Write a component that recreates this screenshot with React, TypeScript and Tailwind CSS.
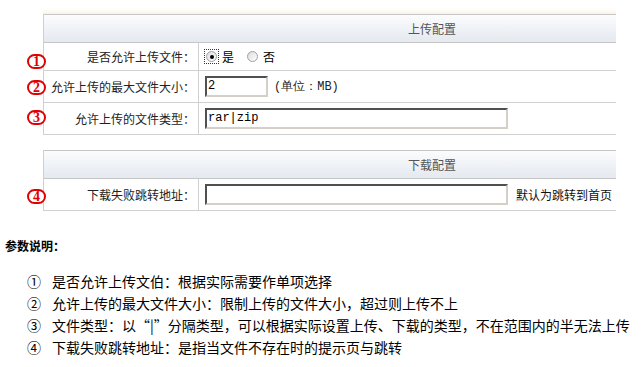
const cn = "font-['Noto_Sans_CJK_SC',sans-serif]"

function Mark({ n, className }: { n: string; className: string }) {
  return (
    <span
      className={`absolute left-[27px] flex h-[15px] w-[19px] items-center justify-center rounded-full border-2 border-[#e00000] bg-white font-['Liberation_Serif',serif] text-[14px] font-bold leading-none text-[#e00000] ${className}`}
    >
      {n}
    </span>
  )
}

function Radio({ checked }: { checked?: boolean }) {
  return (
    <span className={`flex h-[13px] w-[13px] items-center justify-center ${checked ? "outline-1 outline-dotted outline-[#333]" : ""}`}>
      <span className="flex h-[11px] w-[11px] items-center justify-center rounded-full border border-[#a0a0a0] bg-gradient-to-br from-[#dcdcdc] to-white">
        {checked && <span className="h-[4px] w-[4px] rounded-full bg-black" />}
      </span>
    </span>
  )
}

function Input({ w, value }: { w: string; value?: string }) {
  return (
    <div
      className={`${w} h-[21px] border-2 border-t-[#505050] border-l-[#505050] border-r-[#d4d0c8] border-b-[#d4d0c8] bg-white pl-[1px] font-['Liberation_Mono',monospace] text-[12px] leading-[17px] text-black`}
    >
      {value}
    </div>
  )
}

function Row({ label, h, children }: { label: string; h: string; children: React.ReactNode }) {
  return (
    <div className={`flex ${h} border-b border-[#d0d0d0]`}>
      <div className="flex w-[155px] items-center justify-end border-r border-[#d0d0d0] pr-[3px] text-[12px] text-[#222]">
        {label}
      </div>
      <div className="flex flex-1 items-center gap-[6px] pl-[6px]">{children}</div>
    </div>
  )
}

function Header({ title }: { title: string }) {
  return (
    <div className="flex h-[29px] items-center border-y border-[#c6c6c6] bg-gradient-to-b from-[#fbfcfd] to-[#e4e9f0] pl-[364px] text-[12px] text-[#555]">
      {title}
    </div>
  )
}

export default function App() {
  return (
    <div className={`relative h-[367px] w-[642px] overflow-hidden bg-white ${cn}`}>
      <div className="ml-[43px] mt-[8px] h-[6px] w-[573px] bg-gradient-to-b from-white to-[#fdf3e6]" />
      <div className="ml-[43px] w-[573px] border-l border-[#d0d0d0]">
        <Header title="上传配置" />
        <Row label="是否允许上传文件：" h="h-[28px]">
          <div className="flex items-center gap-[4px] text-[12px]">
            <Radio checked />
            <span>是</span>
            <span className="ml-[4px]" />
            <Radio />
            <span>否</span>
          </div>
        </Row>
        <Row label="允许上传的最大文件大小：" h="h-[32px]">
          <Input w="w-[63px]" value="2" />
          <span className="font-['Liberation_Mono',monospace] text-[12px] text-[#222]">
            (单位：MB)
          </span>
        </Row>
        <Row label="允许上传的文件类型：" h="h-[32px]">
          <Input w="w-[303px]" value="rar|zip" />
        </Row>
      </div>

      <div className="ml-[43px] mt-[15px] w-[573px] border-l border-[#d0d0d0]">
        <Header title="下载配置" />
        <Row label="下载失败跳转地址：" h="h-[32px]">
          <Input w="w-[303px]" />
          <span className="ml-[2px] text-[12px] text-[#111]">默认为跳转到首页</span>
        </Row>
      </div>

      <Mark n="1" className="top-[54px]" />
      <Mark n="2" className="top-[80px]" />
      <Mark n="3" className="top-[110px]" />
      <Mark n="4" className="top-[189px]" />

      <div className="ml-[5px] mt-[26px] text-[12px] font-bold text-black">参数说明：</div>
      <ul className="ml-[27px] mt-[15px] text-[14px] leading-[22px] text-black">
        <li><span className="mr-[11px]">①</span>是否允许上传文伯：根据实际需要作单项选择</li>
        <li><span className="mr-[11px]">②</span>允许上传的最大文件大小：限制上传的文件大小，超过则上传不上</li>
        <li><span className="mr-[11px]">③</span>文件类型：以“|”分隔类型，可以根据实际设置上传、下载的类型，不在范围内的半无法上传</li>
        <li><span className="mr-[11px]">④</span>下载失败跳转地址：是指当文件不存在时的提示页与跳转</li>
      </ul>
    </div>
  )
}
